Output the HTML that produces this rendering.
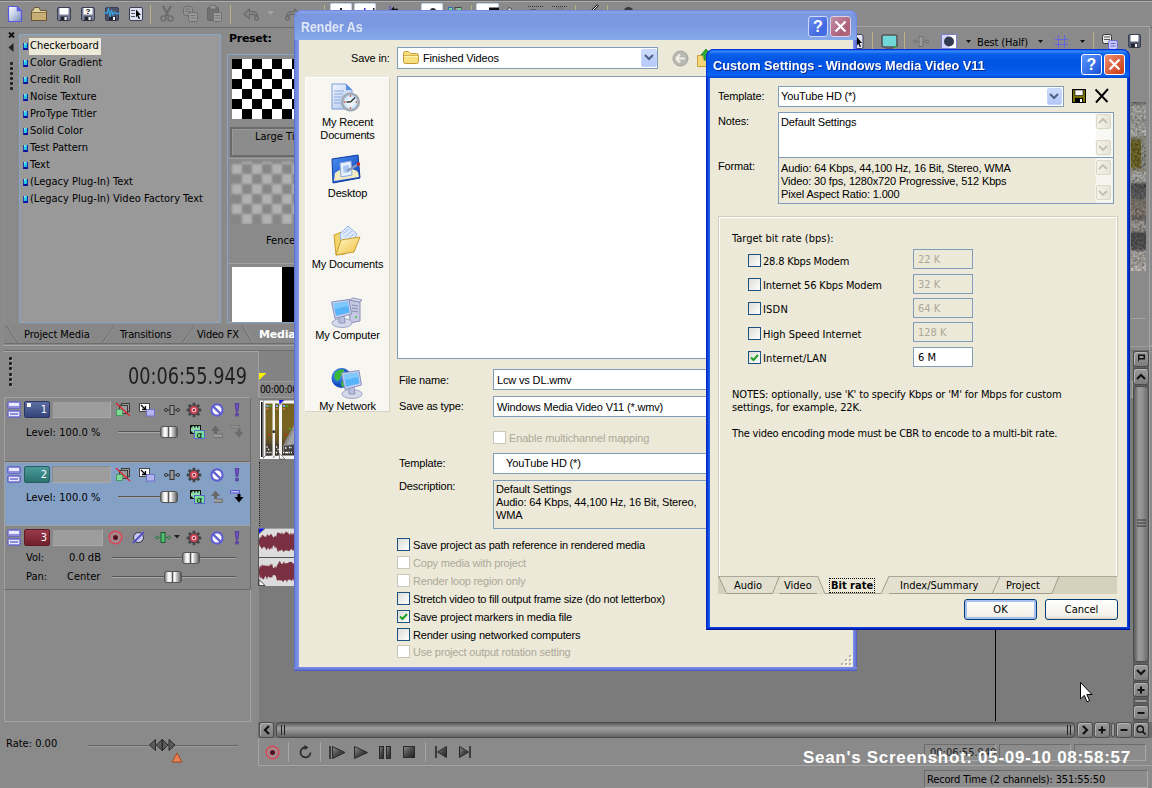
<!DOCTYPE html>
<html><head><meta charset="utf-8"><title>Render As</title>
<style>
html,body{margin:0;padding:0}
body{width:1152px;height:788px;overflow:hidden;background:#8a8a8a;position:relative;font-family:"DejaVu Sans Condensed","DejaVu Sans","Liberation Sans",sans-serif;font-size:11px;color:#000;line-height:13px}
#root{position:absolute;left:0;top:0;width:1152px;height:788px;overflow:hidden;background:#8a8a8a}
.a{position:absolute;box-sizing:border-box}
.t{position:absolute;white-space:nowrap;line-height:13px}
.ms{font-family:"Liberation Sans",sans-serif;font-size:11px;letter-spacing:-0.15px}
.dis{color:#aca899}
svg{position:absolute;overflow:visible}
/* XP checkbox */
.cb{position:absolute;width:13px;height:13px;box-sizing:border-box;border:1px solid #1c5180;background:linear-gradient(135deg,#dcdcd7,#fff)}
.cb.d{border-color:#cac8bb;background:#fff}
.inp{position:absolute;box-sizing:border-box;border:1px solid #7f9db9;background:#fff}
</style></head><body><div id="root">
<div class="a" style="left:0px;top:0px;width:1152px;height:28px;background:#8a8a8a;border-top:1px solid #6a6a6a;border-bottom:1px solid #6c6c6c"></div>
<div class="a" style="left:0px;top:1px;width:1152px;height:1px;background:#a9a9a9"></div>
<svg style="left:8px;top:6px" width="14" height="16" viewBox="0 0 14 16"><defs><linearGradient id="gN" x1="0" y1="0" x2="1" y2="1"><stop offset="0" stop-color="#fff"/><stop offset="0.4" stop-color="#d0d8ec"/><stop offset="1" stop-color="#7088b8"/></linearGradient></defs><path d="M0.5 0.5H9L13.5 5V15.5H0.5Z" fill="url(#gN)" stroke="#5a5ae0" stroke-width="1.2"/><path d="M9 0.5V5H13.5Z" fill="#6464e0" stroke="#5a5ae0" stroke-width="0.6"/></svg>
<svg style="left:31px;top:7px" width="17" height="14" viewBox="0 0 17 14"><path d="M0.5 3.5H2L3.5 0.5H8L9.5 3.5H15.5V13.5H0.5Z" fill="#dcd49c" stroke="#6e5430"/><rect x="1" y="6" width="14" height="7" fill="#c6ae76"/><path d="M1 5.5H15" stroke="#8a7444"/></svg>
<svg style="left:57px;top:7px" width="14" height="14" viewBox="0 0 14 14"><rect x="0.5" y="0.5" width="13" height="13" rx="1.5" fill="#7a8098" stroke="#3a3e50"/><rect x="2.5" y="1" width="9" height="6.5" fill="#fff"/><rect x="3.5" y="9.5" width="7" height="4" fill="#23252e"/><rect x="7.5" y="10" width="2.2" height="3" fill="#fff"/></svg>
<svg style="left:81px;top:7px" width="14" height="14" viewBox="0 0 14 14"><rect x="0.5" y="0.5" width="13" height="13" rx="1.5" fill="#7a8098" stroke="#3a3e50"/><rect x="2.5" y="1" width="9" height="6.5" fill="#fff"/><rect x="3.5" y="9.5" width="7" height="4" fill="#23252e"/><rect x="7.5" y="10" width="2.2" height="3" fill="#fff"/><text x="7" y="7" font-size="8" font-weight="bold" text-anchor="middle" font-family="Liberation Sans,sans-serif" fill="#000">?</text></svg>
<svg style="left:104px;top:7px" width="16" height="14" viewBox="0 0 16 14"><rect x="1.5" y="0.5" width="13" height="13" rx="1.5" fill="#4e5268" stroke="#3c4055"/><rect x="5" y="9.5" width="7" height="4" fill="#23252e"/><rect x="9" y="10" width="2" height="3" fill="#fff"/><path d="M0 6H3L4.5 2L6 10L7.5 3L9 8L10.5 5L12 6.5H16" fill="none" stroke="#39a0e0" stroke-width="1.3"/></svg>
<svg style="left:129px;top:7px" width="14" height="14" viewBox="0 0 14 14"><rect x="0.5" y="0.5" width="13" height="13" rx="1.5" fill="#dfe3f5" stroke="#3c4055"/><path d="M2 3.5H6M2 6.5H6M2 9.5H6" stroke="#555" stroke-width="1.2"/><path d="M7 2.5L12 8H9.5L11 11.5L9.7 12L8.3 8.7L7 10.5Z" fill="#000"/></svg>
<div class="a" style="left:150px;top:5px;width:1px;height:19px;background:#b9b08a"></div>
<svg style="left:160px;top:6px" width="14" height="16" viewBox="0 0 14 16"><path d="M3 0L8.5 10M11 0L5.5 10" stroke="#6a6a6a" stroke-width="2" fill="none"/><circle cx="3.5" cy="12.5" r="2.5" fill="none" stroke="#6e6e6e" stroke-width="1.5"/><circle cx="10.5" cy="12.5" r="2.5" fill="none" stroke="#6e6e6e" stroke-width="1.5"/></svg>
<svg style="left:183px;top:6px" width="15" height="16" viewBox="0 0 15 16"><rect x="0.5" y="0.5" width="9" height="9" rx="2" fill="#939393" stroke="#6e6e6e"/><rect x="5.5" y="6.5" width="9" height="9" rx="2" fill="#999" stroke="#6e6e6e"/><path d="M2 3H8M2 5.5H8M7.5 9.5H12.5M7.5 12H12.5" stroke="#777"/></svg>
<svg style="left:207px;top:5px" width="15" height="17" viewBox="0 0 15 17"><rect x="0.5" y="2.5" width="11" height="13" rx="1.5" fill="#727272" stroke="#666"/><rect x="3" y="0.5" width="6" height="3.5" rx="1" fill="#999" stroke="#6e6e6e"/><rect x="6.5" y="7.5" width="8" height="9" rx="1" fill="#9a9a9a" stroke="#6e6e6e"/><path d="M8 10.5H13M8 13H13" stroke="#777"/></svg>
<div class="a" style="left:230px;top:5px;width:1px;height:19px;background:#b9b08a"></div>
<svg style="left:243px;top:8px" width="17" height="13" viewBox="0 0 17 13"><path d="M0.8 6.2L6.5 0.8V3.4Q13.5 2.6 14.6 7.6L12.6 8.2Q11.5 5.6 6.5 6.2V10.8Z" fill="#858585" stroke="#686868" stroke-width="1.1" stroke-linejoin="round"/><circle cx="13.5" cy="10.3" r="1.9" fill="none" stroke="#686868" stroke-width="1.2"/></svg>
<svg style="left:267px;top:11px" width="7" height="4" viewBox="0 0 7 4"><path d="M0 0H7L3.5 4Z" fill="#a4a4a4"/></svg>
<svg style="left:284px;top:8px" width="17" height="13" viewBox="0 0 17 13"><path d="M16.2 6.2L10.5 0.8V3.4Q3.5 2.6 2.4 7.6L4.4 8.2Q5.5 5.6 10.5 6.2V10.8Z" fill="#858585" stroke="#686868" stroke-width="1.1" stroke-linejoin="round"/><circle cx="3.5" cy="10.3" r="1.9" fill="none" stroke="#686868" stroke-width="1.2"/></svg>
<div class="a" style="left:330px;top:3px;width:22px;height:9px;background:#fff;border:1px solid #c4d4ec;border-bottom:0;border-radius:2px 2px 0 0"></div>
<div class="a" style="left:354px;top:3px;width:22px;height:9px;background:#fff;border:1px solid #c4d4ec;border-bottom:0;border-radius:2px 2px 0 0"></div>
<div class="a" style="left:421px;top:3px;width:22px;height:9px;background:#fff;border:1px solid #c4d4ec;border-bottom:0;border-radius:2px 2px 0 0"></div>
<div class="a" style="left:476px;top:3px;width:23px;height:9px;background:#fff;border:1px solid #c4d4ec;border-bottom:0;border-radius:2px 2px 0 0"></div>
<div class="a" style="left:324px;top:5px;width:1px;height:8px;background:#b9b08a"></div>
<div class="a" style="left:471px;top:5px;width:1px;height:8px;background:#b9b08a"></div>
<div class="a" style="left:575px;top:5px;width:1px;height:8px;background:#b9b08a"></div>
<div class="a" style="left:607px;top:5px;width:1px;height:8px;background:#b9b08a"></div>
<svg style="left:389px;top:6px" width="9" height="5" viewBox="0 0 9 5"><path d="M1 0V5" stroke="#4040e0"/><path d="M2 3.5L5 0.5V6.5Z" fill="#111"/><path d="M4 3.5H9" stroke="#111" stroke-width="1.6"/></svg>
<svg style="left:448px;top:7px" width="14" height="4" viewBox="0 0 14 4"><rect x="0.5" y="0.5" width="4" height="4" fill="#70d890" stroke="#4068c0"/><rect x="7" y="0.5" width="6" height="4" fill="#a0a0a0" stroke="#444"/><rect x="10" y="1" width="3" height="3" fill="#70d890"/></svg>
<svg style="left:340px;top:8px" width="4" height="3" viewBox="0 0 4 3"><rect width="2" height="3" fill="#222"/></svg>
<svg style="left:364px;top:8px" width="12" height="3" viewBox="0 0 12 3"><rect x="0" width="1.5" height="3" fill="#3030d0"/><rect x="9" width="1.5" height="3" fill="#222"/></svg>
<svg style="left:430px;top:7px" width="6" height="4" viewBox="0 0 6 4"><path d="M0 4A3 3 0 0 1 6 4Z" fill="#333"/></svg>
<svg style="left:489px;top:7px" width="10" height="4" viewBox="0 0 10 4"><path d="M0 0.5H10V3H7V4H3V3H0Z" fill="#111"/></svg>
<svg style="left:507px;top:7px" width="5" height="4" viewBox="0 0 5 4"><circle cx="2.5" cy="2.5" r="1.8" fill="#ddd" stroke="#444"/></svg>
<svg style="left:528px;top:6px" width="15" height="5" viewBox="0 0 15 5"><path d="M0 0.5H15" stroke="#333" stroke-dasharray="1 1"/><path d="M2 3.5H8" stroke="#666"/></svg>
<svg style="left:552px;top:6px" width="15" height="5" viewBox="0 0 15 5"><path d="M0 0.5H15" stroke="#333" stroke-dasharray="1 1"/><path d="M5 4.5A3 3 0 0 1 11 4.5" stroke="#777" fill="none"/></svg>
<svg style="left:591px;top:5px" width="8" height="6" viewBox="0 0 8 6"><path d="M1 6L7 0" stroke="#111" stroke-width="2.4"/><path d="M1.5 5.5L6.5 0.5" stroke="#fff" stroke-width="1"/></svg>
<svg style="left:624px;top:7px" width="9" height="4" viewBox="0 0 9 4"><path d="M0 4A4.5 4 0 0 1 9 4Z" fill="#3a3a3a"/></svg>
<div class="a" style="left:4px;top:29px;width:1px;height:317px;background:#8e8e8e"></div>
<svg style="left:8px;top:32px" width="7" height="6" viewBox="0 0 7 6"><path d="M1 0.5L6 5.5M6 0.5L1 5.5" stroke="#111" stroke-width="1.8"/></svg>
<svg style="left:8px;top:43px" width="6" height="9" viewBox="0 0 6 9"><path d="M5.5 0V9L0.5 4.5Z" fill="#222"/></svg>
<div class="a" style="left:10px;top:62px;width:3px;height:3px;background:#222;border-radius:1px"></div>
<div class="a" style="left:10px;top:67px;width:3px;height:3px;background:#222;border-radius:1px"></div>
<div class="a" style="left:10px;top:72px;width:3px;height:3px;background:#222;border-radius:1px"></div>
<div class="a" style="left:10px;top:77px;width:3px;height:3px;background:#222;border-radius:1px"></div>
<div class="a" style="left:10px;top:82px;width:3px;height:3px;background:#222;border-radius:1px"></div>
<div class="a" style="left:10px;top:87px;width:3px;height:3px;background:#222;border-radius:1px"></div>
<div class="a" style="left:19px;top:34px;width:202px;height:289px;background:#999;border:1px solid #86a6c8"></div>
<div class="a" style="left:29px;top:38px;width:72px;height:17px;background:#ece9d8"></div>
<div class="a" style="left:23px;top:43px;width:5px;height:7px;background:linear-gradient(135deg,#e0fcff 0,#30d4e8 35%,#10b8d4 100%);border-left:1px solid #2838b0;border-bottom:2px solid #0c1098;border-right:1px solid #1828a8"></div>
<div class="t " style="left:30px;top:39px;letter-spacing:0px">Checkerboard</div>
<div class="a" style="left:23px;top:60px;width:5px;height:7px;background:linear-gradient(135deg,#e0fcff 0,#30d4e8 35%,#10b8d4 100%);border-left:1px solid #2838b0;border-bottom:2px solid #0c1098;border-right:1px solid #1828a8"></div>
<div class="t " style="left:30px;top:56px;letter-spacing:0px">Color Gradient</div>
<div class="a" style="left:23px;top:77px;width:5px;height:7px;background:linear-gradient(135deg,#e0fcff 0,#30d4e8 35%,#10b8d4 100%);border-left:1px solid #2838b0;border-bottom:2px solid #0c1098;border-right:1px solid #1828a8"></div>
<div class="t " style="left:30px;top:73px;letter-spacing:0px">Credit Roll</div>
<div class="a" style="left:23px;top:94px;width:5px;height:7px;background:linear-gradient(135deg,#e0fcff 0,#30d4e8 35%,#10b8d4 100%);border-left:1px solid #2838b0;border-bottom:2px solid #0c1098;border-right:1px solid #1828a8"></div>
<div class="t " style="left:30px;top:90px;letter-spacing:0px">Noise Texture</div>
<div class="a" style="left:23px;top:111px;width:5px;height:7px;background:linear-gradient(135deg,#e0fcff 0,#30d4e8 35%,#10b8d4 100%);border-left:1px solid #2838b0;border-bottom:2px solid #0c1098;border-right:1px solid #1828a8"></div>
<div class="t " style="left:30px;top:107px;letter-spacing:0px">ProType Titler</div>
<div class="a" style="left:23px;top:128px;width:5px;height:7px;background:linear-gradient(135deg,#e0fcff 0,#30d4e8 35%,#10b8d4 100%);border-left:1px solid #2838b0;border-bottom:2px solid #0c1098;border-right:1px solid #1828a8"></div>
<div class="t " style="left:30px;top:124px;letter-spacing:0px">Solid Color</div>
<div class="a" style="left:23px;top:145px;width:5px;height:7px;background:linear-gradient(135deg,#e0fcff 0,#30d4e8 35%,#10b8d4 100%);border-left:1px solid #2838b0;border-bottom:2px solid #0c1098;border-right:1px solid #1828a8"></div>
<div class="t " style="left:30px;top:141px;letter-spacing:0px">Test Pattern</div>
<div class="a" style="left:23px;top:162px;width:5px;height:7px;background:linear-gradient(135deg,#e0fcff 0,#30d4e8 35%,#10b8d4 100%);border-left:1px solid #2838b0;border-bottom:2px solid #0c1098;border-right:1px solid #1828a8"></div>
<div class="t " style="left:30px;top:158px;letter-spacing:0px">Text</div>
<div class="a" style="left:23px;top:179px;width:5px;height:7px;background:linear-gradient(135deg,#e0fcff 0,#30d4e8 35%,#10b8d4 100%);border-left:1px solid #2838b0;border-bottom:2px solid #0c1098;border-right:1px solid #1828a8"></div>
<div class="t " style="left:30px;top:175px;letter-spacing:0px">(Legacy Plug-In) Text</div>
<div class="a" style="left:23px;top:196px;width:5px;height:7px;background:linear-gradient(135deg,#e0fcff 0,#30d4e8 35%,#10b8d4 100%);border-left:1px solid #2838b0;border-bottom:2px solid #0c1098;border-right:1px solid #1828a8"></div>
<div class="t " style="left:30px;top:192px;letter-spacing:0px">(Legacy Plug-In) Video Factory Text</div>
<div class="t " style="left:229px;top:32px;font-weight:bold;font-family:'DejaVu Sans',sans-serif;font-size:11px;letter-spacing:-0.3px">Preset:</div>
<div class="a" style="left:227px;top:54px;width:80px;height:269px;background:#8a8a8a;border:1px solid #86a6c8;border-right:0"></div>
<div class="a" style="left:232px;top:59px;width:70px;height:60px;background:#fff"></div>
<svg style="left:232px;top:59px" width="70" height="60" viewBox="0 0 70 60"><rect x="0" y="0" width="10" height="10"/><rect x="20" y="0" width="10" height="10"/><rect x="40" y="0" width="10" height="10"/><rect x="60" y="0" width="10" height="10"/><rect x="10" y="10" width="10" height="10"/><rect x="30" y="10" width="10" height="10"/><rect x="50" y="10" width="10" height="10"/><rect x="0" y="20" width="10" height="10"/><rect x="20" y="20" width="10" height="10"/><rect x="40" y="20" width="10" height="10"/><rect x="60" y="20" width="10" height="10"/><rect x="10" y="30" width="10" height="10"/><rect x="30" y="30" width="10" height="10"/><rect x="50" y="30" width="10" height="10"/><rect x="0" y="40" width="10" height="10"/><rect x="20" y="40" width="10" height="10"/><rect x="40" y="40" width="10" height="10"/><rect x="60" y="40" width="10" height="10"/><rect x="10" y="50" width="10" height="10"/><rect x="30" y="50" width="10" height="10"/><rect x="50" y="50" width="10" height="10"/></svg>
<div class="a" style="left:230px;top:127px;width:80px;height:30px;border:2px solid #6a6a6a;border-right:0;background:#8c8c8c;box-shadow:inset 1px 1px 0 #9a9a9a"></div>
<div class="t " style="left:255px;top:130px;">Large Ti</div>
<div class="a" style="left:232px;top:162px;width:70px;height:62px;background:#b2b2b2;background-image:linear-gradient(45deg,#868686 25%,transparent 25%,transparent 75%,#868686 75%),linear-gradient(45deg,#868686 25%,transparent 25%,transparent 75%,#868686 75%);background-size:20px 20px;background-position:0 2px,10px 12px;filter:blur(1.2px)"></div>
<div class="a" style="left:228px;top:224px;width:79px;height:4px;background:#8a8a8a"></div>
<div class="t " style="left:266px;top:234px;">Fence</div>
<div class="a" style="left:228px;top:263px;width:80px;height:1px;background:#a0a0a0"></div>
<div class="a" style="left:228px;top:158px;width:80px;height:1px;background:#a0a0a0"></div>
<div class="a" style="left:232px;top:267px;width:50px;height:55px;background:#fff"></div>
<div class="a" style="left:282px;top:267px;width:20px;height:55px;background:#000"></div>
<div class="a" style="left:4px;top:325px;width:300px;height:19px;background:#878787;border-bottom:1px solid #6e6e6e"></div>
<svg style="left:4px;top:325px" width="300" height="19" viewBox="0 0 300 19"><path d="M2 0L14 18M111 0L98 18M191 0L178 18M238 0L248 18" stroke="#686868" fill="none"/><path d="M3 0L15 18M112 0L99 18M192 0L179 18M239 0L249 18" stroke="#9a9a9a" fill="none" stroke-width="0.8"/></svg>
<div class="t " style="left:24px;top:328px;letter-spacing:-0.08px">Project Media</div>
<div class="t " style="left:120px;top:328px;letter-spacing:-0.15px">Transitions</div>
<div class="t " style="left:197px;top:328px;letter-spacing:-0.2px">Video FX</div>
<div class="t " style="left:259px;top:328px;font-weight:bold;color:#fff;font-family:'DejaVu Sans',sans-serif;font-size:11px;letter-spacing:-0.2px">Media</div>
<div class="a" style="left:3px;top:345px;width:1149px;height:1px;background:#a6a6a6"></div>
<div class="a" style="left:3px;top:350px;width:1149px;height:1px;background:#6e6e6e"></div>
<div class="a" style="left:3px;top:351px;width:1149px;height:1px;background:#a6a6a6"></div>
<div class="a" style="left:9px;top:357px;width:3px;height:3px;background:#1c1c1c;border-radius:1px;box-shadow:1px 1px 0 #a0a0a0"></div>
<div class="a" style="left:9px;top:362px;width:3px;height:3px;background:#1c1c1c;border-radius:1px;box-shadow:1px 1px 0 #a0a0a0"></div>
<div class="a" style="left:9px;top:367px;width:3px;height:3px;background:#1c1c1c;border-radius:1px;box-shadow:1px 1px 0 #a0a0a0"></div>
<div class="a" style="left:9px;top:373px;width:3px;height:3px;background:#1c1c1c;border-radius:1px;box-shadow:1px 1px 0 #a0a0a0"></div>
<div class="a" style="left:9px;top:378px;width:3px;height:3px;background:#1c1c1c;border-radius:1px;box-shadow:1px 1px 0 #a0a0a0"></div>
<div class="a" style="left:9px;top:383px;width:3px;height:3px;background:#1c1c1c;border-radius:1px;box-shadow:1px 1px 0 #a0a0a0"></div>
<div class="t" style="left:128px;top:363px;width:140px;font-size:22.6px;line-height:26px;color:#1e1e1e;transform-origin:0 0;transform:scaleX(0.872)">00:06:55.949</div>
<div class="a" style="left:4px;top:397px;width:247px;height:65px;background:#878787;border:1px solid #a2a2a2;border-right-color:#6c6c6c;border-bottom-color:#6c6c6c"></div><div class="a" style="left:7px;top:401px;width:14px;height:8px;background:#8c8cd8;border:1px solid #6a6ac0;border-radius:2px"></div><div class="a" style="left:9px;top:403px;width:10px;height:3px;background:#e8e8ff"></div><div class="a" style="left:7px;top:410px;width:14px;height:8px;background:#8c8cd8;border:1px solid #6a6ac0;border-radius:2px"></div><div class="a" style="left:9px;top:412px;width:10px;height:4px;background:#8c8cd8;border:1px solid #e8e8ff"></div><div class="a" style="left:24px;top:401px;width:26px;height:17px;background:linear-gradient(#5c6ea2,#34447a);border:1px solid #2a3560;border-radius:2px"></div><div class="a" style="left:27px;top:403px;width:4px;height:4px;background:#fff"></div><div class="t " style="left:24px;top:403px;width:23px;text-align:right;color:#fff">1</div><div class="a" style="left:52px;top:401px;width:59px;height:17px;background:#9d9d9d;border:1px solid #8a8a8a;border-right-color:#aaa;border-bottom-color:#aaa"></div>
<div class="a" style="left:4px;top:462px;width:247px;height:65px;background:#84a0c4;border:1px solid #a2a2a2;border-right-color:#6c6c6c;border-bottom-color:#6c6c6c"></div><div class="a" style="left:7px;top:466px;width:14px;height:8px;background:#8c8cd8;border:1px solid #6a6ac0;border-radius:2px"></div><div class="a" style="left:9px;top:468px;width:10px;height:3px;background:#e8e8ff"></div><div class="a" style="left:7px;top:475px;width:14px;height:8px;background:#8c8cd8;border:1px solid #6a6ac0;border-radius:2px"></div><div class="a" style="left:9px;top:477px;width:10px;height:4px;background:#8c8cd8;border:1px solid #e8e8ff"></div><div class="a" style="left:24px;top:466px;width:26px;height:17px;background:linear-gradient(#4a9a9a,#2c7070);border:1px solid #275e5e;border-radius:2px"></div><div class="t " style="left:24px;top:468px;width:23px;text-align:right;color:#fff">2</div><div class="a" style="left:52px;top:466px;width:59px;height:17px;background:#9d9d9d;border:1px solid #8a8a8a;border-right-color:#aaa;border-bottom-color:#aaa"></div>
<div class="a" style="left:4px;top:525px;width:247px;height:65px;background:#878787;border:1px solid #a2a2a2;border-right-color:#6c6c6c;border-bottom-color:#6c6c6c"></div><div class="a" style="left:7px;top:529px;width:14px;height:8px;background:#8c8cd8;border:1px solid #6a6ac0;border-radius:2px"></div><div class="a" style="left:9px;top:531px;width:10px;height:3px;background:#e8e8ff"></div><div class="a" style="left:7px;top:538px;width:14px;height:8px;background:#8c8cd8;border:1px solid #6a6ac0;border-radius:2px"></div><div class="a" style="left:9px;top:540px;width:10px;height:4px;background:#8c8cd8;border:1px solid #e8e8ff"></div><div class="a" style="left:24px;top:529px;width:26px;height:17px;background:linear-gradient(#9a3a4a,#70202c);border:1px solid #5e1a27;border-radius:2px"></div><div class="t " style="left:24px;top:531px;width:23px;text-align:right;color:#fff">3</div><div class="a" style="left:52px;top:529px;width:51px;height:17px;background:#9d9d9d;border:1px solid #8a8a8a;border-right-color:#aaa;border-bottom-color:#aaa"></div>
<div class="a" style="left:4px;top:590px;width:247px;height:132px;background:#8a8a8a;border:1px solid #a2a2a2;border-top:0"></div>
<svg style="left:116px;top:403px" width="15" height="14" viewBox="0 0 15 14"><rect x="5.5" y="0.5" width="8" height="8" fill="#9a9a9a" stroke="#3a3a3a"/><rect x="3.5" y="2.5" width="8" height="8" fill="#9a9a9a" stroke="#3a3a3a"/><rect x="0.5" y="6.5" width="6" height="6" fill="#80d898" stroke="#4a9a60"/><path d="M0 0L14 13" stroke="#e02030" stroke-width="1.2"/></svg><svg style="left:139px;top:403px" width="16" height="14" viewBox="0 0 16 14"><rect x="0.5" y="0.5" width="10" height="8" fill="#fff" stroke="#444"/><rect x="7.5" y="6.5" width="8" height="6.5" fill="#b4b4f0" stroke="#7070c8"/><path d="M2 2L6.5 6.5M6.5 3V6.5H3" stroke="#000" stroke-width="1.3" fill="none"/></svg><svg style="left:164px;top:405px" width="16" height="10" viewBox="0 0 16 10"><circle cx="2" cy="5" r="1.5" fill="none" stroke="#333"/><circle cx="14" cy="5" r="1.5" fill="none" stroke="#333"/><rect x="6" y="0.5" width="4" height="9" fill="#999" stroke="#333"/><path d="M3.5 5H6M10 5H12.5" stroke="#333"/></svg><svg style="left:186px;top:402px" width="16" height="16" viewBox="0 0 16 16"><rect x="6.6" y="0.7" width="2.8" height="14.6" rx="0.5" fill="#454545" transform="rotate(0 8 8)"/><rect x="6.6" y="0.7" width="2.8" height="14.6" rx="0.5" fill="#454545" transform="rotate(45 8 8)"/><rect x="6.6" y="0.7" width="2.8" height="14.6" rx="0.5" fill="#454545" transform="rotate(90 8 8)"/><rect x="6.6" y="0.7" width="2.8" height="14.6" rx="0.5" fill="#454545" transform="rotate(135 8 8)"/><circle cx="8" cy="8" r="5.2" fill="#454545"/><circle cx="8" cy="8" r="3.9" fill="#d84458"/><circle cx="8" cy="8" r="2.3" fill="#f0b8c0"/><circle cx="8" cy="8" r="1.1" fill="#701828"/></svg><svg style="left:210px;top:403px" width="14" height="14" viewBox="0 0 14 14"><circle cx="7" cy="7" r="5.6" fill="#fff" stroke="#6060d0" stroke-width="2.2"/><path d="M3 3.3L10.8 10.8" stroke="#6060d0" stroke-width="2.4"/></svg><svg style="left:234px;top:403px" width="6" height="14" viewBox="0 0 6 14"><path d="M1.2 0.5H4.8L3.8 8.8H2.2Z" fill="#7050c0" stroke="#4a3498" stroke-width="0.8"/><rect x="1.8" y="10.5" width="2.4" height="2.4" fill="#7050c0" stroke="#4a3498" stroke-width="0.8"/></svg>
<div class="t " style="left:26px;top:426px;letter-spacing:0.08px">Level: 100.0 %</div><div class="a" style="left:118px;top:431px;width:44px;height:1px;background:#555"></div><div class="a" style="left:118px;top:432px;width:44px;height:1px;background:#a8a8a8"></div><div class="a" style="left:160px;top:426px;width:18px;height:12px;background:linear-gradient(90deg,#777 0,#eee 18%,#fff 30%,#ddd 40%,#555 44%,#555 50%,#eee 54%,#fff 62%,#ccc 70%,#888 90%,#555 100%);border:1px solid #555;border-radius:3px"></div><svg style="left:190px;top:425px" width="15" height="14" viewBox="0 0 15 14"><rect x="0.5" y="0.5" width="10" height="8" fill="#90dcac" stroke="#111"/><path d="M1 1.5H10M1 7.5H10" stroke="#111" stroke-dasharray="1.5 1.5" stroke-width="1.8"/><rect x="4.5" y="5.5" width="10" height="8" fill="#78e098" stroke="#5a68c8"/><text x="9.5" y="12.5" font-size="9" text-anchor="middle" fill="#000" font-family="DejaVu Sans,sans-serif">α</text></svg><svg style="left:210px;top:425px" width="13" height="13" viewBox="0 0 13 13"><path d="M4 12.5H12.5V9H6.5V5" fill="#9a9a9a" stroke="#707070"/><path d="M1 6L5.5 0.5L10 6H7V9H4V6Z" fill="#686868"/></svg><svg style="left:230px;top:425px" width="14" height="13" viewBox="0 0 14 13"><path d="M0.5 0.5H9.5V3H0.5Z" fill="#949494" stroke="#767676"/><path d="M4.5 7H7.5V4H10.5V7H13.5L9 12.5Z" fill="#6c6c6c"/></svg>
<svg style="left:116px;top:468px" width="15" height="14" viewBox="0 0 15 14"><rect x="5.5" y="0.5" width="8" height="8" fill="#9a9a9a" stroke="#3a3a3a"/><rect x="3.5" y="2.5" width="8" height="8" fill="#9a9a9a" stroke="#3a3a3a"/><rect x="0.5" y="6.5" width="6" height="6" fill="#80d898" stroke="#4a9a60"/><path d="M0 0L14 13" stroke="#e02030" stroke-width="1.2"/></svg><svg style="left:139px;top:468px" width="16" height="14" viewBox="0 0 16 14"><rect x="0.5" y="0.5" width="10" height="8" fill="#fff" stroke="#444"/><rect x="7.5" y="6.5" width="8" height="6.5" fill="#b4b4f0" stroke="#7070c8"/><path d="M2 2L6.5 6.5M6.5 3V6.5H3" stroke="#000" stroke-width="1.3" fill="none"/></svg><svg style="left:164px;top:470px" width="16" height="10" viewBox="0 0 16 10"><circle cx="2" cy="5" r="1.5" fill="none" stroke="#333"/><circle cx="14" cy="5" r="1.5" fill="none" stroke="#333"/><rect x="6" y="0.5" width="4" height="9" fill="#999" stroke="#333"/><path d="M3.5 5H6M10 5H12.5" stroke="#333"/></svg><svg style="left:186px;top:467px" width="16" height="16" viewBox="0 0 16 16"><rect x="6.6" y="0.7" width="2.8" height="14.6" rx="0.5" fill="#454545" transform="rotate(0 8 8)"/><rect x="6.6" y="0.7" width="2.8" height="14.6" rx="0.5" fill="#454545" transform="rotate(45 8 8)"/><rect x="6.6" y="0.7" width="2.8" height="14.6" rx="0.5" fill="#454545" transform="rotate(90 8 8)"/><rect x="6.6" y="0.7" width="2.8" height="14.6" rx="0.5" fill="#454545" transform="rotate(135 8 8)"/><circle cx="8" cy="8" r="5.2" fill="#454545"/><circle cx="8" cy="8" r="3.9" fill="#d84458"/><circle cx="8" cy="8" r="2.3" fill="#f0b8c0"/><circle cx="8" cy="8" r="1.1" fill="#701828"/></svg><svg style="left:210px;top:468px" width="14" height="14" viewBox="0 0 14 14"><circle cx="7" cy="7" r="5.6" fill="#fff" stroke="#6060d0" stroke-width="2.2"/><path d="M3 3.3L10.8 10.8" stroke="#6060d0" stroke-width="2.4"/></svg><svg style="left:234px;top:468px" width="6" height="14" viewBox="0 0 6 14"><path d="M1.2 0.5H4.8L3.8 8.8H2.2Z" fill="#7050c0" stroke="#4a3498" stroke-width="0.8"/><rect x="1.8" y="10.5" width="2.4" height="2.4" fill="#7050c0" stroke="#4a3498" stroke-width="0.8"/></svg>
<div class="t " style="left:26px;top:491px;letter-spacing:0.08px">Level: 100.0 %</div><div class="a" style="left:118px;top:496px;width:44px;height:1px;background:#555"></div><div class="a" style="left:118px;top:497px;width:44px;height:1px;background:#a8a8a8"></div><div class="a" style="left:160px;top:491px;width:18px;height:12px;background:linear-gradient(90deg,#777 0,#eee 18%,#fff 30%,#ddd 40%,#555 44%,#555 50%,#eee 54%,#fff 62%,#ccc 70%,#888 90%,#555 100%);border:1px solid #555;border-radius:3px"></div><svg style="left:190px;top:490px" width="15" height="14" viewBox="0 0 15 14"><rect x="0.5" y="0.5" width="10" height="8" fill="#90dcac" stroke="#111"/><path d="M1 1.5H10M1 7.5H10" stroke="#111" stroke-dasharray="1.5 1.5" stroke-width="1.8"/><rect x="4.5" y="5.5" width="10" height="8" fill="#78e098" stroke="#5a68c8"/><text x="9.5" y="12.5" font-size="9" text-anchor="middle" fill="#000" font-family="DejaVu Sans,sans-serif">α</text></svg><svg style="left:210px;top:490px" width="13" height="13" viewBox="0 0 13 13"><path d="M4 12.5H12.5V9H6.5V5" fill="#9a9a9a" stroke="#707070"/><path d="M1 6L5.5 0.5L10 6H7V9H4V6Z" fill="#686868"/></svg><svg style="left:230px;top:490px" width="14" height="13" viewBox="0 0 14 13"><path d="M0.5 0.5H9.5V3H0.5Z" fill="#b8b8f4" stroke="#5a5ad0"/><path d="M9.5 0.5V6" stroke="#5a5ad0"/><path d="M4.5 7H7.5V4H10.5V7H13.5L9 12.5Z" fill="#000"/></svg>
<svg style="left:108px;top:530px" width="15" height="15" viewBox="0 0 15 15"><circle cx="7.5" cy="7.5" r="6.3" fill="#9a8a8c" stroke="#dc4658" stroke-width="1.5"/><circle cx="7.5" cy="7.5" r="3.6" fill="#c08088"/><circle cx="7.5" cy="7.5" r="2.5" fill="#4a1420"/></svg>
<svg style="left:132px;top:531px" width="13" height="13" viewBox="0 0 13 13"><circle cx="6.5" cy="6.5" r="5" fill="#c8c8f4" stroke="#333" stroke-width="1"/><path d="M1 12L12 1" stroke="#5050c8" stroke-width="1.8"/></svg>
<svg style="left:155px;top:532px" width="16" height="11" viewBox="0 0 16 11"><circle cx="2" cy="5.5" r="1.5" fill="none" stroke="#2a7a40"/><circle cx="14" cy="5.5" r="1.5" fill="none" stroke="#2a7a40"/><rect x="6" y="0.5" width="4" height="10" fill="#50c070" stroke="#1a5a30"/><path d="M3.5 5.5H6M10 5.5H12.5" stroke="#2a7a40"/></svg>
<svg style="left:174px;top:535px" width="6" height="4" viewBox="0 0 6 4"><path d="M0 0H6L3 3.5Z" fill="#222"/></svg>
<svg style="left:186px;top:530px" width="16" height="16" viewBox="0 0 16 16"><rect x="6.6" y="0.7" width="2.8" height="14.6" rx="0.5" fill="#454545" transform="rotate(0 8 8)"/><rect x="6.6" y="0.7" width="2.8" height="14.6" rx="0.5" fill="#454545" transform="rotate(45 8 8)"/><rect x="6.6" y="0.7" width="2.8" height="14.6" rx="0.5" fill="#454545" transform="rotate(90 8 8)"/><rect x="6.6" y="0.7" width="2.8" height="14.6" rx="0.5" fill="#454545" transform="rotate(135 8 8)"/><circle cx="8" cy="8" r="5.2" fill="#454545"/><circle cx="8" cy="8" r="3.9" fill="#d84458"/><circle cx="8" cy="8" r="2.3" fill="#f0b8c0"/><circle cx="8" cy="8" r="1.1" fill="#701828"/></svg>
<svg style="left:210px;top:531px" width="14" height="14" viewBox="0 0 14 14"><circle cx="7" cy="7" r="5.6" fill="#fff" stroke="#6060d0" stroke-width="2.2"/><path d="M3 3.3L10.8 10.8" stroke="#6060d0" stroke-width="2.4"/></svg>
<svg style="left:234px;top:531px" width="6" height="14" viewBox="0 0 6 14"><path d="M1.2 0.5H4.8L3.8 8.8H2.2Z" fill="#7050c0" stroke="#4a3498" stroke-width="0.8"/><rect x="1.8" y="10.5" width="2.4" height="2.4" fill="#7050c0" stroke="#4a3498" stroke-width="0.8"/></svg>
<div class="t " style="left:26px;top:551px;">Vol:</div>
<div class="t " style="left:69px;top:551px;">0.0 dB</div>
<div class="t " style="left:26px;top:570px;">Pan:</div>
<div class="t " style="left:67px;top:570px;">Center</div>
<div class="a" style="left:112px;top:557px;width:124px;height:1px;background:#555"></div><div class="a" style="left:112px;top:558px;width:124px;height:1px;background:#a8a8a8"></div><div class="a" style="left:182px;top:552px;width:18px;height:12px;background:linear-gradient(90deg,#777 0,#eee 18%,#fff 30%,#ddd 40%,#555 44%,#555 50%,#eee 54%,#fff 62%,#ccc 70%,#888 90%,#555 100%);border:1px solid #555;border-radius:3px"></div>
<div class="a" style="left:112px;top:576px;width:124px;height:1px;background:#555"></div><div class="a" style="left:112px;top:577px;width:124px;height:1px;background:#a8a8a8"></div><div class="a" style="left:164px;top:571px;width:18px;height:12px;background:linear-gradient(90deg,#777 0,#eee 18%,#fff 30%,#ddd 40%,#555 44%,#555 50%,#eee 54%,#fff 62%,#ccc 70%,#888 90%,#555 100%);border:1px solid #555;border-radius:3px"></div>
<div class="t " style="left:6px;top:737px;">Rate: 0.00</div>
<div class="a" style="left:88px;top:745px;width:150px;height:1px;background:#666"></div>
<div class="a" style="left:88px;top:746px;width:150px;height:1px;background:#999"></div>
<svg style="left:149px;top:739px" width="27" height="12" viewBox="0 0 27 12"><path d="M0.5 6L6.5 0.5V11.5ZM7.5 6L13 0.5V11.5ZM13.5 0.5L19 6L13.5 11.5ZM20 0.5L26 6L20 11.5Z" fill="#5a5a5a" stroke="#2a2a2a"/></svg>
<svg style="left:171px;top:752px" width="12" height="11" viewBox="0 0 12 11"><path d="M6 1L11 10H1Z" fill="#e88050" stroke="#a04820"/></svg>
<div class="a" style="left:857px;top:26px;width:293px;height:320px;background:#8a8a8a;border-top:1px solid #a4a4a4;border-right:1px solid #a4a4a4"></div>
<div class="a" style="left:872px;top:32px;width:1px;height:18px;background:#b9b08a"></div>
<svg style="left:857px;top:34px" width="7" height="15" viewBox="0 0 7 15"><rect x="-6" y="0.5" width="12" height="14" rx="1.5" fill="#dfe3f5" stroke="#3c4055"/><path d="M0 3L5 9H2.5L4 12.5L2.7 13L1.3 9.7L0 11.5Z" fill="#000"/></svg>
<svg style="left:881px;top:34px" width="17" height="16" viewBox="0 0 17 16"><rect x="1" y="1" width="15" height="12" rx="2" fill="#70d8d8" stroke="#555" stroke-width="1.6"/><path d="M5 15H12" stroke="#555" stroke-width="1.6"/><circle cx="14.5" cy="13" r="1.2" fill="#30b040"/></svg>
<div class="a" style="left:904px;top:32px;width:1px;height:18px;background:#b9b08a"></div>
<svg style="left:913px;top:36px" width="16" height="11" viewBox="0 0 16 11"><circle cx="2" cy="5.5" r="1.5" fill="none" stroke="#707070"/><circle cx="14" cy="5.5" r="1.5" fill="none" stroke="#707070"/><rect x="6" y="0.5" width="4" height="10" fill="#9a9a9a" stroke="#707070"/><path d="M3.5 5.5H6M10 5.5H12.5" stroke="#707070"/></svg>
<svg style="left:941px;top:34px" width="16" height="15" viewBox="0 0 16 15"><rect x="0.5" y="0.5" width="15" height="14" fill="#d4d4f8" stroke="#8080c8"/><rect x="8" y="1" width="7" height="13" fill="#fff"/><circle cx="8" cy="7.5" r="5" fill="#333a50"/></svg>
<svg style="left:966px;top:40px" width="5" height="3" viewBox="0 0 5 3"><path d="M0 0H5L2.5 3Z" fill="#111"/></svg>
<div class="t " style="left:977px;top:36px;letter-spacing:-0.15px">Best (Half)</div>
<svg style="left:1038px;top:40px" width="5" height="3" viewBox="0 0 5 3"><path d="M0 0H5L2.5 3Z" fill="#111"/></svg>
<svg style="left:1055px;top:35px" width="14" height="13" viewBox="0 0 14 13"><path d="M3.5 0V13M9.5 0V13M0 4.5H13M0 9.5H13" stroke="#6464dc" stroke-width="1"/></svg>
<svg style="left:1080px;top:40px" width="5" height="3" viewBox="0 0 5 3"><path d="M0 0H5L2.5 3Z" fill="#111"/></svg>
<div class="a" style="left:1093px;top:32px;width:1px;height:18px;background:#b9b08a"></div>
<svg style="left:1102px;top:34px" width="16" height="16" viewBox="0 0 16 16"><rect x="0.5" y="0.5" width="9" height="9" rx="2" fill="#e8e8e8" stroke="#333"/><path d="M2 3H8M2 5.5H8" stroke="#555"/><rect x="6.5" y="6.5" width="9" height="9" rx="2" fill="#c8c8ff" stroke="#6868d0"/><path d="M8.5 9.5H13.5M8.5 12H13.5" stroke="#6868d0"/></svg>
<svg style="left:1128px;top:34px" width="13" height="14" viewBox="0 0 13 14"><rect x="0.5" y="0.5" width="12" height="13" rx="1.5" fill="#5a5f78" stroke="#3c4055"/><rect x="2.5" y="1" width="8" height="6.5" fill="#fff"/><rect x="3" y="9.5" width="7" height="4" fill="#23252e"/><rect x="7" y="10" width="2.2" height="3" fill="#fff"/></svg>
<div class="a" style="left:1131px;top:102px;width:15px;height:169px;background:linear-gradient(#6c6c6c 0,#b0b0ac 3%,#a2a29e 12%,#b8b8b4 19%,#7c7a60 22%,#6e6826 24%,#746c2a 38%,#8c8a78 40%,#b4b4b0 42%,#a4a4a0 47%,#58585a 49%,#626264 56%,#7e7870 58%,#8a8078 66%,#6a6664 69%,#a8a29c 71%,#989490 76%,#505052 78%,#5c5c5e 87%,#b4b0ac 89%,#a8a4a0 95%,#d0c8c4 100%)"></div>
<div class="a" style="left:1141px;top:139px;width:5px;height:30px;background:linear-gradient(#9a9a90,#8a8a84)"></div>
<svg style="left:1131px;top:102px" width="15" height="169" viewBox="0 0 15 169"><defs><filter id="nz" x="0" y="0" width="100%" height="100%"><feTurbulence type="fractalNoise" baseFrequency="0.45" numOctaves="2" seed="7"/><feColorMatrix type="matrix" values="0 0 0 0 0  0 0 0 0 0  0 0 0 0 0  1.6 0 0 0 -0.55"/></filter></defs><rect width="15" height="169" filter="url(#nz)" fill="#000" opacity="0.55"/></svg>
<div class="a" style="left:1131px;top:318px;width:15px;height:1px;background:#a4a4a4"></div>
<div class="a" style="left:857px;top:346px;width:295px;height:1px;background:#9a9a9a"></div>
<div class="a" style="left:258px;top:351px;width:1px;height:372px;background:#a0a0a0"></div>
<div class="a" style="left:259px;top:351px;width:874px;height:371px;background:#7b7b7b"></div>
<div class="a" style="left:259px;top:351px;width:874px;height:30px;background:#838383"></div>
<svg style="left:259px;top:373px" width="8" height="7" viewBox="0 0 8 7"><path d="M0 0H7.5L0 7Z" fill="#f8f000"/></svg>
<div class="a" style="left:259px;top:381px;width:874px;height:17px;background:#8a8a8a;border:1px solid #9c9c9c"></div>
<div class="t " style="left:260px;top:384px;font-size:10px;line-height:12px;letter-spacing:-0.35px">00:00:00</div>
<div class="a" style="left:251px;top:397px;width:8px;height:325px;background:#8a8a8a"></div>
<svg style="left:259px;top:400px" width="37" height="59" viewBox="0 0 37 59"><defs><linearGradient id="gB" x1="0" y1="0" x2="0" y2="1"><stop offset="0" stop-color="#74601e"/><stop offset="0.45" stop-color="#7a6422"/><stop offset="0.7" stop-color="#685628"/><stop offset="0.8" stop-color="#4a4030"/><stop offset="1" stop-color="#3a3630"/></linearGradient></defs><rect x="1" y="0.5" width="36" height="58.5" fill="#f4f4f4"/><rect x="0" y="0.5" width="1" height="58.5" fill="#8a8a8a"/><rect x="2" y="2" width="1.6" height="55" fill="#111"/><rect x="4.2" y="0.5" width="0.8" height="58" fill="#909090"/><rect x="6.5" y="3.5" width="7" height="52" fill="url(#gB)"/><rect x="7.3" y="5" width="2.2" height="2" fill="#78a8f8"/><rect x="7.3" y="8" width="2.2" height="1.6" fill="#c87850"/><rect x="10.3" y="5.5" width="2" height="1.2" fill="#20e020"/><rect x="9.5" y="34" width="1.5" height="1.5" fill="#f01818"/><path d="M7.5 47h1.5M9.0 49.5h1.5M7.5 52.5h5" stroke="#fff" stroke-width="1.4" stroke-dasharray="1.2 0.8"/><rect x="16" y="3.5" width="4" height="52" fill="url(#gB)"/><rect x="16.8" y="5" width="2.2" height="2" fill="#78a8f8"/><rect x="16.8" y="8" width="2.2" height="1.6" fill="#c87850"/><path d="M17 47h1.5M18.5 49.5h1.5M17 52.5h2" stroke="#fff" stroke-width="1.4" stroke-dasharray="1.2 0.8"/><rect x="23" y="3.5" width="14" height="52" fill="url(#gB)"/><rect x="23.8" y="5" width="2.2" height="2" fill="#78a8f8"/><rect x="23.8" y="8" width="2.2" height="1.6" fill="#c87850"/><rect x="26.8" y="5.5" width="2" height="1.2" fill="#20e020"/><rect x="26" y="34" width="1.5" height="1.5" fill="#f01818"/><path d="M24 47h1.5M25.5 49.5h1.5M24 52.5h5" stroke="#fff" stroke-width="1.4" stroke-dasharray="1.2 0.8"/><path d="M37 21L28 38L24 46V52H37Z" fill="#8c8c8a"/><path d="M37 26L31 38L27 47H37Z" fill="#a4a4a2"/><path d="M25 46L37 44V52H25Z" fill="#2a2a2a" opacity="0.75"/><path d="M26 48h2M30 47.5h3M27 52.5h6" stroke="#fff" stroke-width="1.3" stroke-dasharray="1.5 1"/><rect x="30" y="28" width="1.5" height="1.3" fill="#20e020"/><path d="M4 58L6.5 55.5H12M14 58L16 55.5H19M21 58L23 55.5" stroke="#555" fill="none" stroke-width="0.8"/><path d="M20.5 53.5L26 59H20.5Z" fill="#fff" stroke="#444" stroke-width="0.6"/><rect x="13.6" y="30.5" width="2.2" height="2.4" fill="#111"/></svg>
<svg style="left:279px;top:400px" width="6" height="6" viewBox="0 0 6 6"><path d="M0 0H5L0.5 4.5Z" fill="#1010f0"/><path d="M5.5 0L0 6" stroke="#777" stroke-width="0.8"/></svg>
<div class="a" style="left:259px;top:462px;width:1px;height:64px;border-left:1px dotted #222"></div>
<div class="a" style="left:258px;top:528px;width:38px;height:58px;background:#dcdcdc;border-top:1px solid #a0a0a0;border-left:1px solid #555"></div>
<div class="a" style="left:259px;top:557px;width:37px;height:1px;background:#555"></div>
<svg style="left:259px;top:528px" width="37" height="58" viewBox="0 0 37 58"><path d="M0 12.0L1 8.7L2 9.7L3 6.7L4 7.2L5 7.9L6 9.0L7 8.8L8 6.6L9 6.6L10 8.2L11 6.7L12 6.1L13 7.0L14 9.2L15 9.3L16 7.6L17 8.9L18 5.6L19 4.1L20 5.2L21 4.9L22 6.3L23 4.0L24 6.5L25 5.6L26 4.9L27 3.0L28 4.9L29 4.1L30 6.5L31 6.5L32 4.4L33 7.2L34 4.7L35 6.5L36 6.6L37 7.0L37 23.5L36 22.6L35 22.0L34 23.0L33 21.4L32 20.9L31 22.5L30 23.2L29 22.8L28 22.4L27 22.3L26 22.8L25 23.5L24 23.7L23 21.4L22 22.3L21 22.7L20 22.6L19 24.2L18 21.5L17 18.4L16 20.5L15 17.5L14 17.7L13 21.5L12 19.2L11 22.0L10 21.1L9 19.4L8 21.6L7 22.0L6 18.8L5 19.4L4 19.1L3 21.2L2 19.6L1 18.6L0 16.0Z" fill="#7a3040"/><path d="M0 41.5L1 37.0L2 39.4L3 36.1L4 37.9L5 37.1L6 38.1L7 37.5L8 37.7L9 37.7L10 38.6L11 36.0L12 37.6L13 35.2L14 39.8L15 40.2L16 38.0L17 40.1L18 37.3L19 36.1L20 33.8L21 33.0L22 35.5L23 36.1L24 35.3L25 33.2L26 35.9L27 35.1L28 35.0L29 35.3L30 34.0L31 33.7L32 33.9L33 34.2L34 35.2L35 36.0L36 33.6L37 35.5L37 52.9L36 53.8L35 53.6L34 50.5L33 52.9L32 52.5L31 51.4L30 52.0L29 51.4L28 54.5L27 51.9L26 52.0L25 52.8L24 54.2L23 52.4L22 52.2L21 52.4L20 52.1L19 52.5L18 52.7L17 48.6L16 47.3L15 47.3L14 46.8L13 50.1L12 48.7L11 49.7L10 48.9L9 48.2L8 51.7L7 48.5L6 48.6L5 50.9L4 51.3L3 50.6L2 48.7L1 51.1L0 45.5Z" fill="#7a3040"/><path d="M0 0.5H6L0 5.5Z" fill="#1010f0"/><path d="M6 0.5L0 6" stroke="#666" stroke-width="0.8"/><path d="M0 51.5L6 57.5H0Z" fill="#fff" stroke="#222" stroke-width="0.8"/></svg>
<div class="a" style="left:995px;top:629px;width:1px;height:92px;background:#000"></div>
<div class="a" style="left:1133px;top:351px;width:16px;height:371px;background:#5e5e5e"></div>
<div class="a" style="left:1149px;top:347px;width:1px;height:375px;background:#a0a0a0"></div>
<div class="a" style="left:1133px;top:351px;width:16px;height:16px;background:linear-gradient(#9a9a9a,#7c7c7c);border:1px solid #4c4c4c;border-radius:3px;box-shadow:inset 1px 1px 0 #b4b4b4"></div>
<svg style="left:1136px;top:354px" width="10" height="10" viewBox="0 0 10 10"><path d="M2 0.5H9V5.5H3.5L2 8Z" fill="#111"/><rect x="3.5" y="2" width="4" height="2" fill="#9a9a9a"/></svg>
<div class="a" style="left:1133px;top:368px;width:16px;height:17px;background:linear-gradient(#9a9a9a,#7c7c7c);border:1px solid #4c4c4c;border-radius:3px;box-shadow:inset 1px 1px 0 #b4b4b4"></div>
<svg style="left:1136px;top:373px" width="10" height="7" viewBox="0 0 10 7"><path d="M1 6L5 2L9 6" stroke="#111" stroke-width="2.2" fill="none"/></svg>
<div class="a" style="left:1133px;top:386px;width:16px;height:276px;background:linear-gradient(90deg,#5a5a5a,#9c9c9c 35%,#909090 60%,#6a6a6a);border:1px solid #4c4c4c;border-radius:4px"></div>
<svg style="left:1137px;top:519px" width="9" height="9" viewBox="0 0 9 9"><path d="M0 1H9M0 4H9M0 7H9" stroke="#333"/></svg>
<div class="a" style="left:1133px;top:664px;width:16px;height:17px;background:linear-gradient(#9a9a9a,#7c7c7c);border:1px solid #4c4c4c;border-radius:3px;box-shadow:inset 1px 1px 0 #b4b4b4"></div>
<svg style="left:1136px;top:669px" width="10" height="7" viewBox="0 0 10 7"><path d="M1 1L5 5L9 1" stroke="#111" stroke-width="2.2" fill="none"/></svg>
<div class="a" style="left:1133px;top:682px;width:16px;height:15px;background:linear-gradient(#9a9a9a,#7c7c7c);border:1px solid #4c4c4c;border-radius:3px;box-shadow:inset 1px 1px 0 #b4b4b4"></div>
<svg style="left:1137px;top:686px" width="8" height="8" viewBox="0 0 8 8"><path d="M4 0.5V7.5M0.5 4H7.5" stroke="#111" stroke-width="2"/></svg>
<div class="a" style="left:1134px;top:699px;width:14px;height:4px;background:#9a9a9a;border:1px solid #555;border-radius:2px"></div>
<div class="a" style="left:1133px;top:705px;width:16px;height:15px;background:linear-gradient(#9a9a9a,#7c7c7c);border:1px solid #4c4c4c;border-radius:3px;box-shadow:inset 1px 1px 0 #b4b4b4"></div>
<svg style="left:1137px;top:709px" width="8" height="8" viewBox="0 0 8 8"><path d="M0.5 4H7.5" stroke="#111" stroke-width="2"/></svg>
<div class="a" style="left:258px;top:722px;width:894px;height:16px;background:#6e6e6e"></div>
<div class="a" style="left:259px;top:722px;width:15px;height:16px;background:linear-gradient(#9a9a9a,#7c7c7c);border:1px solid #4c4c4c;border-radius:3px;box-shadow:inset 1px 1px 0 #b4b4b4"></div>
<svg style="left:263px;top:725px" width="7" height="10" viewBox="0 0 7 10"><path d="M6 1L2 5L6 9" stroke="#111" stroke-width="2.2" fill="none"/></svg>
<div class="a" style="left:276px;top:722px;width:799px;height:16px;background:linear-gradient(#5a5a5a,#9e9e9e 35%,#8c8c8c 60%,#626262);border:1px solid #4c4c4c;border-radius:4px"></div>
<svg style="left:280px;top:725px" width="6" height="10" viewBox="0 0 6 10"><path d="M1.5 0V10M4.5 0V10" stroke="#222" stroke-width="1"/></svg>
<svg style="left:1066px;top:725px" width="6" height="10" viewBox="0 0 6 10"><path d="M1.5 0V10M4.5 0V10" stroke="#222" stroke-width="1"/></svg>
<div class="a" style="left:1077px;top:722px;width:16px;height:16px;background:linear-gradient(#9a9a9a,#7c7c7c);border:1px solid #4c4c4c;border-radius:3px;box-shadow:inset 1px 1px 0 #b4b4b4"></div>
<svg style="left:1082px;top:725px" width="7" height="10" viewBox="0 0 7 10"><path d="M1 1L5 5L1 9" stroke="#111" stroke-width="2.2" fill="none"/></svg>
<div class="a" style="left:1094px;top:722px;width:16px;height:16px;background:linear-gradient(#9a9a9a,#7c7c7c);border:1px solid #4c4c4c;border-radius:3px;box-shadow:inset 1px 1px 0 #b4b4b4"></div>
<svg style="left:1098px;top:726px" width="8" height="8" viewBox="0 0 8 8"><path d="M4 0.5V7.5M0.5 4H7.5" stroke="#111" stroke-width="2"/></svg>
<div class="a" style="left:1111px;top:723px;width:4px;height:14px;background:#9a9a9a;border:1px solid #555;border-radius:2px"></div>
<div class="a" style="left:1116px;top:722px;width:16px;height:16px;background:linear-gradient(#9a9a9a,#7c7c7c);border:1px solid #4c4c4c;border-radius:3px;box-shadow:inset 1px 1px 0 #b4b4b4"></div>
<svg style="left:1120px;top:726px" width="8" height="8" viewBox="0 0 8 8"><path d="M0.5 4H7.5" stroke="#111" stroke-width="2"/></svg>
<div class="a" style="left:1133px;top:722px;width:16px;height:16px;background:linear-gradient(#9a9a9a,#7c7c7c);border:1px solid #4c4c4c;border-radius:3px;box-shadow:inset 1px 1px 0 #b4b4b4"></div>
<svg style="left:1136px;top:725px" width="10" height="10" viewBox="0 0 10 10"><circle cx="4.2" cy="4.2" r="3.2" fill="none" stroke="#111" stroke-width="1.3"/><path d="M6.5 6.5L9.5 9.5" stroke="#111" stroke-width="1.6"/></svg>
<div class="a" style="left:258px;top:738px;width:894px;height:28px;background:#8a8a8a;border-left:1px solid #a4a4a4;border-bottom:1px solid #a4a4a4"></div>
<svg style="left:265px;top:745px" width="15" height="15" viewBox="0 0 15 15"><circle cx="7.5" cy="7.5" r="6.3" fill="#9a8a8c" stroke="#dc4658" stroke-width="1.5"/><circle cx="7.5" cy="7.5" r="3.6" fill="#c08088"/><circle cx="7.5" cy="7.5" r="2.5" fill="#4a1420"/></svg>
<div class="a" style="left:288px;top:742px;width:1px;height:20px;background:#a8a8a8"></div>
<div class="a" style="left:320px;top:742px;width:1px;height:20px;background:#a8a8a8"></div>
<div class="a" style="left:425px;top:742px;width:1px;height:20px;background:#a8a8a8"></div>
<svg style="left:299px;top:745px" width="13" height="14" viewBox="0 0 13 14"><path d="M7.5 2.5A5 5 0 1 0 11.5 7.5" fill="none" stroke="#2c2c2c" stroke-width="1.7"/><path d="M5.5 0L9.5 2.5L5.5 5Z" fill="#2c2c2c"/></svg>
<svg style="left:329px;top:746px" width="17" height="13" viewBox="0 0 17 13"><defs><linearGradient id="gT" x1="0" y1="0" x2="1" y2="1"><stop offset="0" stop-color="#8c8c8c"/><stop offset="0.5" stop-color="#484848"/><stop offset="1" stop-color="#222"/></linearGradient></defs><path d="M1 0V13" stroke="#2a2a2a" stroke-width="1.6"/><path d="M3.5 0.5L16 6.5L3.5 12.5Z" fill="url(#gT)" stroke="#2a2a2a"/></svg>
<svg style="left:354px;top:746px" width="14" height="13" viewBox="0 0 14 13"><path d="M0.5 0.5L13.5 6.5L0.5 12.5Z" fill="url(#gT)" stroke="#2a2a2a"/></svg>
<svg style="left:379px;top:746px" width="12" height="13" viewBox="0 0 12 13"><rect x="0.5" y="0.5" width="4" height="12" fill="url(#gT)" stroke="#2a2a2a"/><rect x="7.5" y="0.5" width="4" height="12" fill="url(#gT)" stroke="#2a2a2a"/></svg>
<svg style="left:403px;top:746px" width="12" height="12" viewBox="0 0 12 12"><rect x="0.5" y="0.5" width="11" height="11" fill="url(#gT)" stroke="#2a2a2a"/></svg>
<svg style="left:435px;top:746px" width="12" height="12" viewBox="0 0 12 12"><path d="M1 0V12" stroke="#2a2a2a" stroke-width="1.6"/><path d="M11.5 0.5V11.5L2.5 6Z" fill="url(#gT)" stroke="#2a2a2a"/></svg>
<svg style="left:459px;top:746px" width="12" height="12" viewBox="0 0 12 12"><path d="M11 0V12" stroke="#2a2a2a" stroke-width="1.6"/><path d="M0.5 0.5V11.5L9.5 6Z" fill="url(#gT)" stroke="#2a2a2a"/></svg>
<div class="a" style="left:924px;top:744px;width:72px;height:17px;border:1px solid #6c6c6c;border-right-color:#a8a8a8;border-bottom-color:#a8a8a8;background:#8c8c8c"></div>
<div class="a" style="left:999px;top:744px;width:72px;height:17px;border:1px solid #6c6c6c;border-right-color:#a8a8a8;border-bottom-color:#a8a8a8;background:#8c8c8c"></div>
<div class="a" style="left:1074px;top:744px;width:72px;height:17px;border:1px solid #6c6c6c;border-right-color:#a8a8a8;border-bottom-color:#a8a8a8;background:#8c8c8c"></div>
<div class="t " style="left:930px;top:746px;font-size:11px;color:#222">00:06:55.949</div>
<div class="a" style="left:924px;top:770px;width:224px;height:18px;border:1px solid #6c6c6c;border-right-color:#a8a8a8;border-bottom-color:#a8a8a8;background:#8c8c8c"></div>
<div class="t " style="left:927px;top:773px;letter-spacing:-0.15px">Record Time (2 channels): 351:55:50</div>

<div class="a" style="left:294px;top:10px;width:563px;height:661px;background:#ece9d8;border:4px solid #7a8fe4;border-top:0;border-radius:8px 8px 0 0;box-shadow:inset 1px 0 0 #8498e8"></div>
<div class="a" style="left:294px;top:10px;width:563px;height:30px;background:linear-gradient(#8aa4ea 0,#7a97e0 12%,#7b99e0 50%,#83a5e8 85%,#86aaec 100%);border-radius:8px 8px 0 0;border:1px solid #7288e0;border-bottom:0"></div>
<div class="a" style="left:294px;top:40px;width:4px;height:631px;background:linear-gradient(90deg,#5a66cc,#7086e2 40%,#7c92ea)"></div>
<div class="a" style="left:853px;top:40px;width:4px;height:631px;background:linear-gradient(90deg,#7a90e8,#6c80de 55%,#4e56bc)"></div>
<div class="a" style="left:294px;top:667px;width:563px;height:4px;background:linear-gradient(#788ee8,#6a7cdc 55%,#4a50b8)"></div>
<div class="t " style="left:301px;top:20px;font-family:'Liberation Sans',sans-serif;font-weight:bold;font-size:13.8px;line-height:16px;color:#dfe6f8;transform-origin:0 0;transform:scaleX(0.9)">Render As</div>
<div class="a" style="left:808px;top:16px;width:20px;height:21px;background:linear-gradient(135deg,#7090ec,#4068e0 70%,#4a78e8);border:1px solid #ccd8f6;border-radius:3px"></div>
<div class="t " style="left:808px;top:17px;width:20px;text-align:center;font-family:'Liberation Sans',sans-serif;font-weight:bold;font-size:16px;line-height:19px;color:#fff">?</div>
<div class="a" style="left:830px;top:16px;width:21px;height:21px;background:linear-gradient(135deg,#c090a8,#ac6078 70%,#b06880);border:1px solid #dcd0e4;border-radius:3px"></div>
<svg style="left:834px;top:20px" width="13" height="13" viewBox="0 0 13 13"><path d="M1.5 1.5L11.5 11.5M11.5 1.5L1.5 11.5" stroke="#fff" stroke-width="2.2"/></svg>
<div class="t ms" style="left:351px;top:52px;">Save in:</div>
<div class="a" style="left:397px;top:47px;width:261px;height:22px;border:1px solid #7f9db9;background:#fff"></div>
<svg style="left:403px;top:51px" width="16" height="13" viewBox="0 0 16 13"><path d="M0.5 2.5Q0.5 0.5 2.5 0.5H5.5L7.5 2.5H13.5Q15.5 2.5 15.5 4.5V10.5Q15.5 12.5 13.5 12.5H2.5Q0.5 12.5 0.5 10.5Z" fill="#f8df80" stroke="#c09838"/><path d="M1 5.5H15" stroke="#fff4b8" stroke-width="1"/><path d="M1 4.5H15" stroke="#d8b050"/></svg>
<div class="t ms" style="left:423px;top:52px;">Finished Videos</div>
<div class="a" style="left:641px;top:49px;width:16px;height:18px;background:linear-gradient(#cddcfd,#b4c8f8);border-radius:2px;border:1px solid #c4d4fb"></div>
<svg style="left:644px;top:54px" width="10" height="7" viewBox="0 0 10 7"><path d="M1 1L5 5L9 1" stroke="#4d6185" stroke-width="2" fill="none"/></svg>
<svg style="left:672px;top:50px" width="17" height="17" viewBox="0 0 17 17"><circle cx="8.5" cy="8.5" r="7.5" fill="#b9b9b4" stroke="#a2a29c"/><path d="M4 8.5H13M4 8.5L8 4.5M4 8.5L8 12.5" stroke="#f1efe6" stroke-width="2.2" fill="none"/></svg>
<svg style="left:697px;top:49px" width="12" height="18" viewBox="0 0 12 18"><path d="M0.5 6.5H5L6 8H12V17.5H0.5Z" fill="#f4d878" stroke="#c8a040"/><path d="M9 0L14 6H11V11H7V6H4Z" fill="#30b030" stroke="#187818" stroke-width="0.8"/></svg>
<div class="a" style="left:305px;top:77px;width:85px;height:335px;background:#f7f6f1;border:1px solid #fff;border-right-color:#d8d4c4;border-bottom-color:#d8d4c4"></div>
<svg style="left:331px;top:83px" width="30" height="30" viewBox="0 0 30 30"><defs><linearGradient id="gD" x1="0" y1="0" x2="1" y2="1"><stop offset="0" stop-color="#f4f8ff"/><stop offset="1" stop-color="#a8c0ec"/></linearGradient><radialGradient id="gC"><stop offset="0" stop-color="#fff"/><stop offset="0.75" stop-color="#d8eaf8"/><stop offset="1" stop-color="#a0b8d0"/></radialGradient></defs><path d="M1 1H15L21 7V26H1Z" fill="url(#gD)" stroke="#7a9ad8"/><path d="M15 1V7H21Z" fill="#5a90e0"/><path d="M3 8H13M3 11H12M3 14H11M3 17H10M3 20H10" stroke="#8aaae0"/><circle cx="19.5" cy="19" r="9.5" fill="#a0a4ac"/><circle cx="19.5" cy="19" r="7.7" fill="url(#gC)"/><path d="M19.5 19L24 14.5M19.5 19H15.5" stroke="#333" stroke-width="1.4"/><path d="M19.5 12.3V13.8M19.5 24.2V25.7M12.8 19H14.3M24.7 19H26.2" stroke="#e04820" stroke-width="1.3"/></svg>
<div class="t ms" style="left:305px;top:116px;width:85px;text-align:center">My Recent</div>
<div class="t ms" style="left:305px;top:129px;width:85px;text-align:center">Documents</div>
<svg style="left:331px;top:154px" width="30" height="30" viewBox="0 0 30 30"><defs><linearGradient id="gK" x1="0" y1="0" x2="1" y2="1"><stop offset="0" stop-color="#4a90f0"/><stop offset="1" stop-color="#1040b8"/></linearGradient></defs><path d="M1 5L27 1L29 24L2 29Z" fill="url(#gK)" stroke="#0c3aa0"/><path d="M4 19Q15 10 27 18L28 23L3 27Z" fill="#f4ecc0"/><path d="M9 9L20 7L21 21L10 23Z" fill="#e8f0fc" stroke="#88a8e0"/><path d="M12 12L18 11L18.5 18L12.5 19Z" fill="#a8c8f4"/><path d="M16 17L26 11" stroke="#8898b8" stroke-width="2.2"/><circle cx="27.5" cy="10" r="1.7" fill="#d02818"/></svg>
<div class="t ms" style="left:305px;top:187px;width:85px;text-align:center">Desktop</div>
<svg style="left:332px;top:225px" width="29" height="31" viewBox="0 0 29 31"><defs><linearGradient id="gF" x1="0" y1="0" x2="1" y2="1"><stop offset="0" stop-color="#fff8c8"/><stop offset="1" stop-color="#f0c040"/></linearGradient></defs><path d="M2 10L10 7L14 11L13 29L4 30Z" fill="#f4d468" stroke="#c8a030"/><path d="M8 9L16 1L25 9L18 22L9 18Z" fill="#dce8fc" stroke="#98b4e8"/><path d="M11 9L17 4M13 12L20 6M15 15L22 9" stroke="#a8c0ec"/><path d="M4 30L9 15L28 12L22 27Z" fill="url(#gF)" stroke="#c8a030"/></svg>
<div class="t ms" style="left:305px;top:258px;width:85px;text-align:center">My Documents</div>
<svg style="left:331px;top:297px" width="32" height="30" viewBox="0 0 32 30"><path d="M18 3L29 5V24L19 26Z" fill="#c4c8e0" stroke="#8c90b8"/><path d="M18 3L22 1L31 3L29 5Z" fill="#dfe2f0" stroke="#8c90b8"/><path d="M21 8L27 9M21 11L27 12M21 14L27 15" stroke="#888cb0"/><circle cx="25" cy="20" r="1" fill="#40c040"/><g transform="translate(0 2)"><ellipse cx="11" cy="24" rx="10" ry="4.5" fill="#d4d8e8" stroke="#a0a8c8"/><path d="M8 17H13L14 24H8Z" fill="#b8c0dc" stroke="#9098c0"/><path d="M0.5 3L18 0.5L20.5 15L4 19.5Z" fill="#c8d0ec" stroke="#8890c0"/><path d="M2.5 4.5L16.8 2.5L18.5 13.5L5 17Z" fill="#58b4f8"/><path d="M2.5 4.5L16.8 2.5L17.5 7L3.5 10Z" fill="#90d0fc" opacity="0.7"/></g></svg>
<div class="t ms" style="left:305px;top:329px;width:85px;text-align:center">My Computer</div>
<svg style="left:331px;top:367px" width="32" height="31" viewBox="0 0 32 31"><defs><radialGradient id="gG" cx="0.35" cy="0.35"><stop offset="0" stop-color="#60b0ff"/><stop offset="1" stop-color="#1048c0"/></radialGradient></defs><circle cx="10.5" cy="11" r="10" fill="url(#gG)"/><path d="M4 6Q8 1 13 3Q14 7 10 9Q9 13 6 14Q2 11 4 6ZM11 14Q15 12 17 15Q15 20 11 20Q9 17 11 14Z" fill="#38b838"/><g transform="translate(10 3)"><ellipse cx="11" cy="24" rx="10" ry="4.5" fill="#d4d8e8" stroke="#a0a8c8"/><path d="M8 17H13L14 24H8Z" fill="#b8c0dc" stroke="#9098c0"/><path d="M0.5 3L18 0.5L20.5 15L4 19.5Z" fill="#c8d0ec" stroke="#8890c0"/><path d="M2.5 4.5L16.8 2.5L18.5 13.5L5 17Z" fill="#58b4f8"/><path d="M2.5 4.5L16.8 2.5L17.5 7L3.5 10Z" fill="#90d0fc" opacity="0.7"/></g></svg>
<div class="t ms" style="left:305px;top:400px;width:85px;text-align:center">My Network</div>
<div class="a" style="left:397px;top:76px;width:330px;height:283px;border:1px solid #7f9db9;background:#fff"></div>
<div class="t ms" style="left:399px;top:374px;">File name:</div>
<div class="a" style="left:493px;top:369px;width:240px;height:21px;border:1px solid #7f9db9;background:#fff"></div>
<div class="t ms" style="left:497px;top:374px;">Lcw vs DL.wmv</div>
<div class="t ms" style="left:399px;top:400px;">Save as type:</div>
<div class="a" style="left:493px;top:396px;width:240px;height:21px;border:1px solid #7f9db9;background:#fff"></div>
<div class="t ms" style="left:497px;top:401px;">Windows Media Video V11 (*.wmv)</div>
<div class="cb d" style="left:493px;top:431px"></div>
<div class="t ms dis" style="left:509px;top:432px;">Enable multichannel mapping</div>
<div class="t ms" style="left:399px;top:457px;">Template:</div>
<div class="a" style="left:493px;top:453px;width:240px;height:21px;border:1px solid #7f9db9;background:#fff"></div>
<div class="t ms" style="left:506px;top:457px;">YouTube HD (*)</div>
<div class="t ms" style="left:399px;top:480px;">Description:</div>
<div class="a" style="left:493px;top:480px;width:240px;height:49px;border:1px solid #7f9db9"></div>
<div class="t ms" style="left:496px;top:483px;line-height:13px">Default Settings<br>Audio: 64 Kbps, 44,100 Hz, 16 Bit, Stereo,<br>WMA</div>
<div class="cb" style="left:397px;top:538px"></div>
<div class="t ms" style="left:413px;top:539px;letter-spacing:-0.2px">Save project as path reference in rendered media</div>
<div class="cb d" style="left:397px;top:556px"></div>
<div class="t ms dis" style="left:413px;top:557px;letter-spacing:-0.2px">Copy media with project</div>
<div class="cb d" style="left:397px;top:574px"></div>
<div class="t ms dis" style="left:413px;top:575px;letter-spacing:-0.2px">Render loop region only</div>
<div class="cb" style="left:397px;top:592px"></div>
<div class="t ms" style="left:413px;top:593px;letter-spacing:-0.2px">Stretch video to fill output frame size (do not letterbox)</div>
<div class="cb" style="left:397px;top:610px"></div>
<svg style="left:399px;top:613px" width="9" height="8" viewBox="0 0 9 8"><path d="M1 3.5L3.5 6L8 1" stroke="#21a121" stroke-width="2" fill="none"/></svg>
<div class="t ms" style="left:413px;top:611px;letter-spacing:-0.2px">Save project markers in media file</div>
<div class="cb" style="left:397px;top:628px"></div>
<div class="t ms" style="left:413px;top:629px;letter-spacing:-0.2px">Render using networked computers</div>
<div class="cb d" style="left:397px;top:645px"></div>
<div class="t ms dis" style="left:413px;top:646px;letter-spacing:-0.2px">Use project output rotation setting</div>
<svg style="left:841px;top:655px" width="12" height="12" viewBox="0 0 12 12"><rect x="9" y="1" width="2" height="2" fill="#fff"/><rect x="8" y="0" width="2" height="2" fill="#b8b4a0"/><rect x="5" y="5" width="2" height="2" fill="#fff"/><rect x="4" y="4" width="2" height="2" fill="#b8b4a0"/><rect x="9" y="5" width="2" height="2" fill="#fff"/><rect x="8" y="4" width="2" height="2" fill="#b8b4a0"/><rect x="1" y="9" width="2" height="2" fill="#fff"/><rect x="0" y="8" width="2" height="2" fill="#b8b4a0"/><rect x="5" y="9" width="2" height="2" fill="#fff"/><rect x="4" y="8" width="2" height="2" fill="#b8b4a0"/><rect x="9" y="9" width="2" height="2" fill="#fff"/><rect x="8" y="8" width="2" height="2" fill="#b8b4a0"/></svg>

<div class="a" style="left:706px;top:49px;width:424px;height:581px;background:#ece9d8;border:3px solid #0831d9;border-top:0;border-radius:8px 8px 0 0;box-shadow:inset 1px 0 0 #1c5ce8"></div>
<div class="a" style="left:706px;top:49px;width:424px;height:29px;background:linear-gradient(#0058ee 0,#3a8cf8 4%,#0a60ea 14%,#0254e2 40%,#0358e8 70%,#0a64f4 88%,#0148d0 100%);border-radius:8px 8px 0 0;border:1px solid #0831d9;border-bottom:0"></div>
<div class="a" style="left:706px;top:78px;width:3px;height:552px;background:linear-gradient(90deg,#0024b0,#0838d8 45%,#1a5cec)"></div>
<div class="a" style="left:1127px;top:78px;width:3px;height:552px;background:linear-gradient(90deg,#1048e0,#0030d0 50%,#001488)"></div>
<div class="a" style="left:706px;top:627px;width:424px;height:3px;background:linear-gradient(#1048e0,#0028c8 50%,#000e80)"></div>
<div class="t " style="left:713px;top:58px;font-family:'Liberation Sans',sans-serif;font-weight:bold;font-size:13.5px;line-height:16px;color:#fff;transform-origin:0 0;transform:scaleX(0.945);text-shadow:1px 1px 0 #0a2a8c">Custom Settings - Windows Media Video V11</div>
<div class="a" style="left:1081px;top:54px;width:21px;height:21px;background:linear-gradient(135deg,#5a98ff,#1c50d8);border:1px solid #fff;border-radius:3px"></div>
<div class="t " style="left:1081px;top:55px;width:21px;text-align:center;font-family:'Liberation Sans',sans-serif;font-weight:bold;font-size:16px;line-height:19px;color:#fff">?</div>
<div class="a" style="left:1104px;top:54px;width:21px;height:21px;background:linear-gradient(135deg,#f09070,#c83810);border:1px solid #fff;border-radius:3px"></div>
<svg style="left:1108px;top:58px" width="13" height="13" viewBox="0 0 13 13"><path d="M1.5 1.5L11.5 11.5M11.5 1.5L1.5 11.5" stroke="#fff" stroke-width="2.2"/></svg>
<div class="t ms" style="left:718px;top:90px;">Template:</div>
<div class="a" style="left:778px;top:86px;width:286px;height:21px;border:1px solid #7f9db9;background:#fff"></div>
<div class="t ms" style="left:781px;top:90px;">YouTube HD (*)</div>
<div class="a" style="left:1047px;top:88px;width:15px;height:17px;background:linear-gradient(#cddcfd,#b4c8f8);border-radius:2px;border:1px solid #c4d4fb"></div>
<svg style="left:1049px;top:93px" width="10" height="7" viewBox="0 0 10 7"><path d="M1 1L5 5L9 1" stroke="#4d6185" stroke-width="2" fill="none"/></svg>
<svg style="left:1072px;top:89px" width="14" height="14" viewBox="0 0 14 14"><rect x="0.5" y="0.5" width="13" height="13" fill="#7a7000" stroke="#000"/><rect x="3" y="1" width="8" height="5.5" fill="#fff" stroke="#000" stroke-width="0.6"/><rect x="3" y="9" width="8" height="4.5" fill="#000"/><rect x="8" y="10" width="2" height="3" fill="#fff"/></svg>
<svg style="left:1094px;top:88px" width="16" height="16" viewBox="0 0 16 16"><path d="M1.5 1.5L13.5 14M14 1L2 14.5" stroke="#000" stroke-width="1.9"/></svg>
<div class="t ms" style="left:718px;top:115px;">Notes:</div>
<div class="a" style="left:778px;top:112px;width:336px;height:46px;border:1px solid #7f9db9;background:#fff"></div>
<div class="t ms" style="left:781px;top:116px;">Default Settings</div>
<div class="a" style="left:1096px;top:113px;width:17px;height:44px;background:#f8f8f4"></div>
<div class="a" style="left:1096px;top:114px;width:15px;height:15px;background:linear-gradient(90deg,#f4f3ea,#e6e4d6);border:1px solid #dad7c6;border-radius:2px;box-shadow:0 0 0 1px #f8f7f0"></div><svg style="left:1096px;top:114px" width="15" height="15" viewBox="0 0 15 15"><path d="M3 9L7 5L11 9" stroke="#c2bfac" stroke-width="1.8" fill="none"/></svg>
<div class="a" style="left:1096px;top:140px;width:15px;height:15px;background:linear-gradient(90deg,#f4f3ea,#e6e4d6);border:1px solid #dad7c6;border-radius:2px;box-shadow:0 0 0 1px #f8f7f0"></div><svg style="left:1096px;top:140px" width="15" height="15" viewBox="0 0 15 15"><path d="M3 6L7 10L11 6" stroke="#c2bfac" stroke-width="1.8" fill="none"/></svg>
<div class="t ms" style="left:718px;top:160px;">Format:</div>
<div class="a" style="left:778px;top:157px;width:336px;height:47px;border:1px solid #7f9db9"></div>
<div class="t ms" style="left:781px;top:162px;line-height:13px">Audio: 64 Kbps, 44,100 Hz, 16 Bit, Stereo, WMA<br>Video: 30 fps, 1280x720 Progressive, 512 Kbps<br>Pixel Aspect Ratio: 1.000</div>
<div class="a" style="left:1096px;top:158px;width:17px;height:45px;background:#f4f3ec"></div>
<div class="a" style="left:1096px;top:160px;width:15px;height:15px;background:linear-gradient(90deg,#f4f3ea,#e6e4d6);border:1px solid #dad7c6;border-radius:2px;box-shadow:0 0 0 1px #f8f7f0"></div><svg style="left:1096px;top:160px" width="15" height="15" viewBox="0 0 15 15"><path d="M3 9L7 5L11 9" stroke="#c2bfac" stroke-width="1.8" fill="none"/></svg>
<div class="a" style="left:1096px;top:185px;width:15px;height:15px;background:linear-gradient(90deg,#f4f3ea,#e6e4d6);border:1px solid #dad7c6;border-radius:2px;box-shadow:0 0 0 1px #f8f7f0"></div><svg style="left:1096px;top:185px" width="15" height="15" viewBox="0 0 15 15"><path d="M3 6L7 10L11 6" stroke="#c2bfac" stroke-width="1.8" fill="none"/></svg>
<div class="a" style="left:718px;top:216px;width:399px;height:361px;border:1px solid #d0cdb8;border-right-color:#fff;border-bottom:0;box-shadow:inset 1px 1px 0 #fff,1px 0 0 #d0cdb8"></div>
<div class="t " style="left:732px;top:232px;">Target bit rate (bps):</div>
<div class="cb" style="left:748px;top:254px"></div>
<div class="t " style="left:763px;top:255px;letter-spacing:-0.2px">28.8 Kbps Modem</div>
<div class="a" style="left:913px;top:249px;width:60px;height:20px;border:1px solid #7f9db9;background:#ece9d8"></div>
<div class="t " style="left:918px;top:253px;color:#aca899">22 K</div>
<div class="cb" style="left:748px;top:278px"></div>
<div class="t " style="left:763px;top:279px;letter-spacing:-0.15px">Internet 56 Kbps Modem</div>
<div class="a" style="left:913px;top:274px;width:60px;height:20px;border:1px solid #7f9db9;background:#ece9d8"></div>
<div class="t " style="left:918px;top:278px;color:#aca899">32 K</div>
<div class="cb" style="left:748px;top:302px"></div>
<div class="t " style="left:763px;top:303px;letter-spacing:0.2px">ISDN</div>
<div class="a" style="left:913px;top:298px;width:60px;height:20px;border:1px solid #7f9db9;background:#ece9d8"></div>
<div class="t " style="left:918px;top:302px;color:#aca899">64 K</div>
<div class="cb" style="left:748px;top:327px"></div>
<div class="t " style="left:763px;top:328px;letter-spacing:-0.05px">High Speed Internet</div>
<div class="a" style="left:913px;top:322px;width:60px;height:20px;border:1px solid #7f9db9;background:#ece9d8"></div>
<div class="t " style="left:918px;top:326px;color:#aca899">128 K</div>
<div class="cb" style="left:748px;top:351px"></div>
<svg style="left:750px;top:354px" width="9" height="8" viewBox="0 0 9 8"><path d="M1 3.5L3.5 6L8 1" stroke="#21a121" stroke-width="2" fill="none"/></svg>
<div class="t " style="left:763px;top:352px;letter-spacing:0.1px">Internet/LAN</div>
<div class="a" style="left:913px;top:347px;width:60px;height:20px;border:1px solid #7f9db9;background:#fff"></div>
<div class="t " style="left:918px;top:351px;">6 M</div>
<div class="t " style="left:732px;top:388px;letter-spacing:-0.14px">NOTES: optionally, use 'K' to specify Kbps or 'M' for Mbps for custom<br>settings, for example, 22K.</div>
<div class="t " style="left:732px;top:427px;letter-spacing:-0.25px">The video encoding mode must be CBR to encode to a multi-bit rate.</div>
<div class="a" style="left:718px;top:576px;width:399px;height:18px;background:#d5d1bd"></div>
<svg style="left:718px;top:576px" width="399" height="18" viewBox="0 0 399 18"><path d="M0.5 0L8.5 17.5H334L341 0Z" fill="#e3e0cf"/><path d="M99.7 0L106.8 17.5H163.2L171.1 0Z" fill="#ece9d8"/><path d="M0 0.5H99.7M171.1 0.5H399" stroke="#aca899"/><path d="M0.5 0L8.5 17.5H54.5M54.5 17.5L61.5 0M99.7 0L106.8 17.5H163.2L171.1 0M274.3 17.5L282.1 0M333.9 17.5L341 0M61.5 17.5H99M171 17.5H334" fill="none" stroke="#a09d8c"/></svg>
<div class="t " style="left:734px;top:579px;">Audio</div>
<div class="t " style="left:784px;top:579px;">Video</div>
<div class="t " style="left:831px;top:579px;font-weight:bold;font-family:'DejaVu Sans Condensed',sans-serif">Bit rate</div>
<div class="a" style="left:829px;top:578px;width:46px;height:15px;border:1px dotted #000"></div>
<div class="t " style="left:900px;top:579px;">Index/Summary</div>
<div class="t " style="left:1006px;top:579px;">Project</div>
<div class="a" style="left:964px;top:599px;width:73px;height:21px;border:1px solid #003c74;border-radius:3px;background:linear-gradient(#fff,#f2f0e6 85%,#d6d0c5);box-shadow:inset 0 0 0 2px #a8c0f0;"></div><div class="t " style="left:964px;top:603px;width:73px;text-align:center">OK</div>
<div class="a" style="left:1045px;top:599px;width:73px;height:21px;border:1px solid #003c74;border-radius:3px;background:linear-gradient(#fff,#f2f0e6 85%,#d6d0c5);"></div><div class="t " style="left:1045px;top:603px;width:73px;text-align:center">Cancel</div>

<div class="t" style="left:803px;top:748px;font-family:'Liberation Sans',sans-serif;font-weight:bold;font-size:17px;line-height:20px;color:#fff;letter-spacing:0.7px">Sean's Screenshot: 05-09-10 08:58:57</div>
<svg style="left:1080px;top:682px" width="13" height="21" viewBox="0 0 13 21"><path d="M0.5 0.5V17L4.3 13.4L7 19.8L9.6 18.7L6.9 12.5H12Z" fill="#fff" stroke="#000" stroke-width="1"/></svg>

</div></body></html>
